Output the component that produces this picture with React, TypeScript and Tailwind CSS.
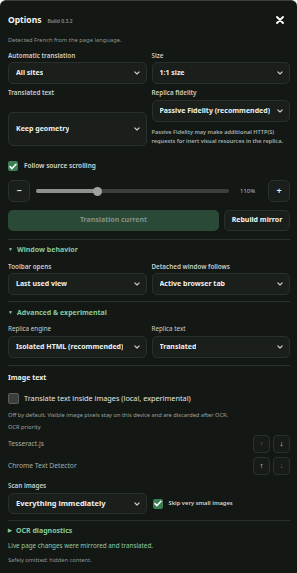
import { ReactNode } from "react";

function Chevron() {
  return (
    <svg width="6" height="4" viewBox="0 0 6 4" className="shrink-0">
      <path d="M0.8 0.8 L3 3 L5.2 0.8" fill="none" stroke="#cfd4d0" strokeWidth="1.1" strokeLinecap="round" strokeLinejoin="round" />
    </svg>
  );
}

function Select({ value, className = "h-[22px]", text = "text-[7px]" }: { value: string; className?: string; text?: string }) {
  return (
    <div
      className={`${className} flex items-center justify-between rounded-[5px] border border-[#2a302c] bg-[#1a1f1c] pl-[7px] pr-[6px] font-bold text-[#eef1ef] ${text}`}
    >
      <span className="truncate whitespace-nowrap">{value}</span>
      <Chevron />
    </div>
  );
}

function Label({ children, className = "" }: { children: ReactNode; className?: string }) {
  return <div className={`flex h-[10px] items-center text-[6.3px] font-semibold text-[#c9cec9] ${className}`}>{children}</div>;
}

function Check({ checked }: { checked: boolean }) {
  return checked ? (
    <div className="flex h-[10px] w-[10px] shrink-0 items-center justify-center rounded-[2px] bg-[#3d7f55]">
      <svg width="8" height="7" viewBox="0 0 8 7">
        <path d="M1 3.6 L3 5.6 L7 1.2" fill="none" stroke="#ffffff" strokeWidth="1.5" strokeLinecap="round" strokeLinejoin="round" />
      </svg>
    </div>
  ) : (
    <div className="h-[11px] w-[11px] shrink-0 rounded-[2px] border border-[#5a5e5b] bg-[#3b3e3c]" />
  );
}

function Divider({ className }: { className: string }) {
  return <div className={`h-px bg-[#2a302c] ${className}`} />;
}

function Section({ children, className }: { children: ReactNode; className: string }) {
  return (
    <div className={`flex h-[10px] items-center gap-[4px] text-[7px] font-bold text-[#86c99c] ${className}`}>
      {children}
    </div>
  );
}

function OrderButtons({ upOn }: { upOn: boolean }) {
  const box = "flex h-[18px] w-[17px] items-center justify-center rounded-[4px] border border-[#2a302c] bg-[#171c19] text-[7px] font-bold";
  return (
    <div className="flex gap-[3px]">
      <div className={`${box} ${upOn ? "text-[#f2f4f2]" : "text-[#6d736f]"}`}>↑</div>
      <div className={`${box} ${upOn ? "text-[#6d736f]" : "text-[#f2f4f2]"}`}>↓</div>
    </div>
  );
}

export default function App() {
  return (
    <div className="h-[573px] w-[297px] overflow-hidden rounded-t-[6px] border-t border-[#3a3f3c] bg-[#131815] pl-[8px] pr-[7px] pt-[13px] font-['Noto_Sans',sans-serif] text-[#e9ece9]">
      <div className="flex h-[12px] items-center justify-between">
        <div className="flex items-baseline gap-[6px]">
          <span className="text-[8.5px] font-bold text-[#f3f5f3]">Options</span>
          <span className="text-[5px] font-semibold text-[#8d948f]">Build 0.3.2</span>
        </div>
        <svg width="8" height="8" viewBox="0 0 8 8" className="mr-[6px]">
          <path d="M1 1 L7 7 M7 1 L1 7" stroke="#ffffff" strokeWidth="1.8" strokeLinecap="round" />
        </svg>
      </div>

      <div className="mt-[9px] flex h-[10px] items-center text-[5.8px] text-[#8d948f]">Detected French from the page language.</div>

      <div className="mt-[6px] grid grid-cols-2 gap-x-[5px]">
        <div>
          <Label>Automatic translation</Label>
          <Select value="All sites" className="mt-[1px] h-[22px]" />
        </div>
        <div>
          <Label>Size</Label>
          <Select value="1:1 size" className="mt-[1px] h-[22px]" />
        </div>
      </div>

      <div className="mt-[4px] grid grid-cols-2 gap-x-[5px]">
        <div>
          <Label>Translated text</Label>
          <Select value="Keep geometry" className="mt-[14px] h-[34px]" />
        </div>
        <div>
          <Label>Replica fidelity</Label>
          <Select value="Passive Fidelity (recommended)" className="mt-[2px] h-[22px]" />
          <div className="mt-[6px] text-[5.6px] font-semibold leading-[9px] text-[#a9b0ab]">
            Passive Fidelity may make additional HTTP(S) requests for inert visual resources in the replica.
          </div>
        </div>
      </div>

      <div className="mt-[15px] flex h-[10px] items-center gap-[6px]">
        <Check checked />
        <span className="text-[6.5px] font-semibold text-[#d3d7d3]">Follow source scrolling</span>
      </div>

      <div className="mt-[9px] flex h-[22px] items-center">
        <div className="flex h-[22px] w-[22px] shrink-0 items-center justify-center rounded-[5px] border border-[#2a302c] bg-[#1a1f1c] text-[9px] font-bold">−</div>
        <div className="relative ml-[6px] h-[4px] w-[193px] shrink-0 rounded-full bg-[#3a3f3c]">
          <div className="h-[4px] w-[61px] rounded-full bg-[#8d928f]" />
          <div className="absolute left-[57px] top-[-2.5px] h-[9px] w-[9px] rounded-full bg-[#9ea39f]" />
        </div>
        <span className="w-[39px] shrink-0 pl-[11px] text-[6px] text-[#b9bfba]">110%</span>
        <div className="flex h-[22px] w-[22px] shrink-0 items-center justify-center rounded-[5px] border border-[#2a302c] bg-[#1a1f1c] text-[9px] font-bold">+</div>
      </div>

      <div className="mt-[8px] flex h-[21px] gap-[5px]">
        <div className="flex flex-1 items-center justify-center rounded-[5px] bg-[#2a4937] text-[7px] font-bold text-[#7f9286]">Translation current</div>
        <div className="flex w-[66px] items-center justify-center rounded-[5px] border border-[#2a302c] bg-[#1a1f1c] text-[7px] font-bold text-[#f2f4f2]">Rebuild mirror</div>
      </div>

      <Divider className="mt-[8px]" />
      <Section className="mt-[5px]"><span className="text-[5px]">▼</span>Window behavior</Section>

      <div className="mt-[7px] grid grid-cols-2 gap-x-[5px]">
        <div>
          <Label>Toolbar opens</Label>
          <Select value="Last used view" className="mt-px h-[22px]" />
        </div>
        <div>
          <Label>Detached window follows</Label>
          <Select value="Active browser tab" className="mt-px h-[22px]" />
        </div>
      </div>

      <Divider className="mt-[6px]" />
      <Section className="mt-[6px]"><span className="text-[5px]">▼</span>Advanced &amp; experimental</Section>

      <div className="mt-[6px] grid grid-cols-2 gap-x-[5px]">
        <div>
          <Label className="!font-normal text-[#b3b9b4]">Replica engine</Label>
          <Select value="Isolated HTML (recommended)" className="mt-[2px] h-[22px]" />
        </div>
        <div>
          <Label className="!font-normal text-[#b3b9b4]">Replica text</Label>
          <Select value="Translated" className="mt-[2px] h-[22px]" />
        </div>
      </div>

      <Divider className="mt-[7px]" />
      <div className="mt-[7px] flex h-[10px] items-center text-[7px] font-bold text-[#eef1ef]">Image text</div>

      <div className="mt-[9px] flex h-[12px] items-center gap-[5px]">
        <Check checked={false} />
        <span className="text-[7.3px] text-[#e2e6e2]">Translate text inside images (local, experimental)</span>
      </div>

      <div className="mt-[6px] flex h-[10px] items-center whitespace-nowrap text-[5.7px] text-[#9aa19c]">
        Off by default. Visible image pixels stay on this device and are discarded after OCR.
      </div>
      <div className="mt-[2px] flex h-[10px] items-center text-[5.7px] text-[#9aa19c]">OCR priority</div>

      <div className="mt-[3px] flex h-[18px] items-center justify-between">
        <span className="text-[6.7px] text-[#a6ada8]">Tesseract.js</span>
        <OrderButtons upOn={false} />
      </div>
      <div className="mt-[4px] flex h-[18px] items-center justify-between">
        <span className="text-[6.7px] text-[#a6ada8]">Chrome Text Detector</span>
        <OrderButtons upOn />
      </div>

      <Label className="mt-[6px]">Scan images</Label>
      <div className="mt-[2px] grid grid-cols-2 gap-x-[5px]">
        <Select value="Everything immediately" className="h-[21px]" text="text-[7.5px]" />
        <div className="flex items-center gap-[6px] pl-px">
          <Check checked />
          <span className="text-[5.8px] font-semibold text-[#d3d7d3]">Skip very small images</span>
        </div>
      </div>

      <Divider className="mt-[6px]" />
      <Section className="mt-[5px]"><span className="text-[5px]">▶</span>OCR diagnostics</Section>
      <div className="mt-[5px] flex h-[10px] items-center text-[6.3px] text-[#93c9a2]">Live page changes were mirrored and translated.</div>
      <div className="mt-[4px] flex h-[10px] items-center text-[5.7px] text-[#8f9691]">Safely omitted: hidden content.</div>
    </div>
  );
}
